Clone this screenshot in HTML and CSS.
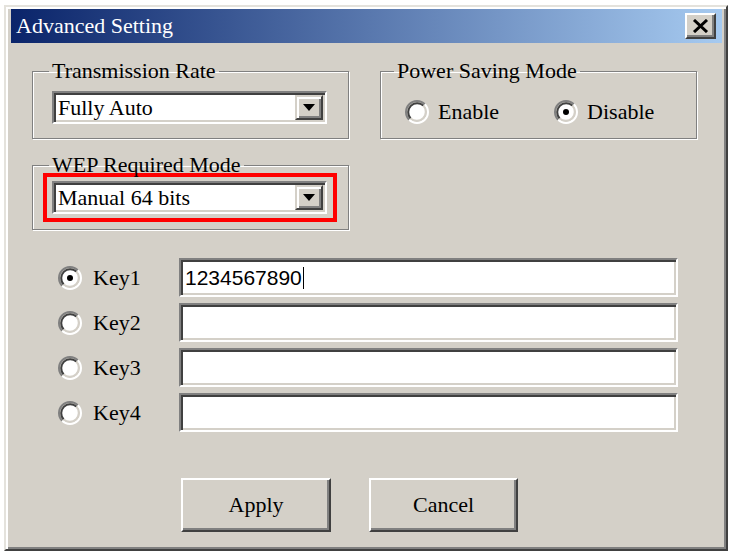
FILE: index.html
```html
<!DOCTYPE html>
<html>
<head>
<meta charset="utf-8">
<title>Advanced Setting</title>
<link rel="stylesheet" href="styles.css">
</head>
<body>
<div class="window">
  <div class="titlebar">
    <span class="title">Advanced Setting</span>
    <div class="close">
      <svg width="17" height="14" viewBox="0 0 17 14"><path d="M2 1 L15 13 M15 1 L2 13" stroke="#000" stroke-width="3" fill="none"/></svg>
    </div>
  </div>
  <div class="client">
    <div class="top-row">
      <fieldset class="group">
        <legend>Transmission Rate</legend>
        <div class="combo combo-rate">
          <span class="combo-text">Fully Auto</span>
          <span class="drop"><svg width="12" height="7" viewBox="0 0 12 7"><path d="M0 0 H12 L6 7 Z" fill="#000"/></svg></span>
        </div>
      </fieldset>
      <fieldset class="group group-power">
        <legend>Power Saving Mode</legend>
        <div class="radios">
          <label class="radio">
            <svg class="rb" width="24" height="24" viewBox="0 0 12 12"><circle cx="6" cy="6" r="4.5" fill="#fff"/><path d="M2.11 9.89 A5.5 5.5 0 0 1 9.89 2.11" stroke="#808080" fill="none"/><path d="M9.89 2.11 A5.5 5.5 0 0 1 2.11 9.89" stroke="#fff" fill="none"/><path d="M2.82 9.18 A4.5 4.5 0 0 1 9.18 2.82" stroke="#404040" fill="none"/><path d="M9.18 2.82 A4.5 4.5 0 0 1 2.82 9.18" stroke="#d4d0c8" fill="none"/></svg>
            <span>Enable</span>
          </label>
          <label class="radio">
            <svg class="rb" width="24" height="24" viewBox="0 0 12 12"><circle cx="6" cy="6" r="4.5" fill="#fff"/><path d="M2.11 9.89 A5.5 5.5 0 0 1 9.89 2.11" stroke="#808080" fill="none"/><path d="M9.89 2.11 A5.5 5.5 0 0 1 2.11 9.89" stroke="#fff" fill="none"/><path d="M2.82 9.18 A4.5 4.5 0 0 1 9.18 2.82" stroke="#404040" fill="none"/><path d="M9.18 2.82 A4.5 4.5 0 0 1 2.82 9.18" stroke="#d4d0c8" fill="none"/><circle cx="6" cy="6" r="1.5" fill="#000"/></svg>
            <span>Disable</span>
          </label>
        </div>
      </fieldset>
    </div>
    <fieldset class="group group-wep">
      <legend>WEP Required Mode</legend>
      <div class="highlight">
        <div class="combo">
          <span class="combo-text">Manual 64 bits</span>
          <span class="drop"><svg width="12" height="7" viewBox="0 0 12 7"><path d="M0 0 H12 L6 7 Z" fill="#000"/></svg></span>
        </div>
      </div>
    </fieldset>
    <div class="keys">
      <svg class="rb" width="24" height="24" viewBox="0 0 12 12"><circle cx="6" cy="6" r="4.5" fill="#fff"/><path d="M2.11 9.89 A5.5 5.5 0 0 1 9.89 2.11" stroke="#808080" fill="none"/><path d="M9.89 2.11 A5.5 5.5 0 0 1 2.11 9.89" stroke="#fff" fill="none"/><path d="M2.82 9.18 A4.5 4.5 0 0 1 9.18 2.82" stroke="#404040" fill="none"/><path d="M9.18 2.82 A4.5 4.5 0 0 1 2.82 9.18" stroke="#d4d0c8" fill="none"/><circle cx="6" cy="6" r="1.5" fill="#000"/></svg>
      <span class="key-label">Key1</span>
      <div class="field"><span class="field-text">1234567890</span><span class="caret"></span></div>

      <svg class="rb" width="24" height="24" viewBox="0 0 12 12"><circle cx="6" cy="6" r="4.5" fill="#fff"/><path d="M2.11 9.89 A5.5 5.5 0 0 1 9.89 2.11" stroke="#808080" fill="none"/><path d="M9.89 2.11 A5.5 5.5 0 0 1 2.11 9.89" stroke="#fff" fill="none"/><path d="M2.82 9.18 A4.5 4.5 0 0 1 9.18 2.82" stroke="#404040" fill="none"/><path d="M9.18 2.82 A4.5 4.5 0 0 1 2.82 9.18" stroke="#d4d0c8" fill="none"/></svg>
      <span class="key-label">Key2</span>
      <div class="field"></div>

      <svg class="rb" width="24" height="24" viewBox="0 0 12 12"><circle cx="6" cy="6" r="4.5" fill="#fff"/><path d="M2.11 9.89 A5.5 5.5 0 0 1 9.89 2.11" stroke="#808080" fill="none"/><path d="M9.89 2.11 A5.5 5.5 0 0 1 2.11 9.89" stroke="#fff" fill="none"/><path d="M2.82 9.18 A4.5 4.5 0 0 1 9.18 2.82" stroke="#404040" fill="none"/><path d="M9.18 2.82 A4.5 4.5 0 0 1 2.82 9.18" stroke="#d4d0c8" fill="none"/></svg>
      <span class="key-label">Key3</span>
      <div class="field"></div>

      <svg class="rb" width="24" height="24" viewBox="0 0 12 12"><circle cx="6" cy="6" r="4.5" fill="#fff"/><path d="M2.11 9.89 A5.5 5.5 0 0 1 9.89 2.11" stroke="#808080" fill="none"/><path d="M9.89 2.11 A5.5 5.5 0 0 1 2.11 9.89" stroke="#fff" fill="none"/><path d="M2.82 9.18 A4.5 4.5 0 0 1 9.18 2.82" stroke="#404040" fill="none"/><path d="M9.18 2.82 A4.5 4.5 0 0 1 2.82 9.18" stroke="#d4d0c8" fill="none"/></svg>
      <span class="key-label">Key4</span>
      <div class="field"></div>
    </div>
    <div class="buttons">
      <div class="btn">Apply</div>
      <div class="btn btn-cancel">Cancel</div>
    </div>
  </div>
</div>
</body>
</html>
```

FILE: styles.css
```css
body {
  margin: 0;
  background: #ffffff;
  font-family: "Liberation Serif", "Times New Roman", serif;
  font-size: 22px;
  color: #000;
}

.window {
  box-sizing: border-box;
  width: 724px;
  height: 546px;
  margin: 5px 0 0 4px;
  background: #d4d0c8;
  border: 2px solid;
  border-color: #e4e2dc #404040 #404040 #e4e2dc;
  box-shadow: inset 2px 2px 0 #ffffff, inset -2px -2px 0 #808080;
  padding: 2px 4px 0 5px;
  display: flex;
  flex-direction: column;
}

.titlebar {
  height: 34px;
  display: flex;
  align-items: center;
  justify-content: space-between;
  padding: 0 6px 0 5px;
  background: linear-gradient(to right, #0a246a, #a6caf0);
  color: #fff;
}

.title {
  line-height: 24px;
}

.close {
  box-sizing: border-box;
  width: 31px;
  height: 26px;
  background: #d4d0c8;
  border: 2px solid;
  border-color: #ffffff #404040 #404040 #ffffff;
  box-shadow: inset -2px -2px 0 #808080;
  display: flex;
  align-items: center;
  justify-content: center;
}

.top-row {
  display: flex;
  gap: 31px;
  margin: 17px 0 0 21px;
}

fieldset.group {
  box-sizing: border-box;
  width: 317px;
  min-width: 0;
  margin: 0;
  padding: 0;
  border: 1px solid #808080;
  box-shadow: inset 1px 1px 0 #ffffff, 1px 1px 0 #ffffff;
}

fieldset.group legend {
  margin-left: 16px;
  padding: 0 3px;
  line-height: 22px;
}

fieldset.group-power legend {
  margin-left: 13px;
}

.combo {
  box-sizing: border-box;
  width: 275px;
  height: 33px;
  background: #fff;
  border: 2px solid;
  border-color: #808080 #ffffff #ffffff #808080;
  box-shadow: inset 2px 2px 0 #404040, inset -2px -2px 0 #d4d0c8;
  padding: 2px 2px 2px 4px;
  display: flex;
  align-items: center;
  justify-content: space-between;
}

.combo-rate {
  margin: 9px 0 14px 19px;
}

.combo-text {
  line-height: 24px;
}

.drop {
  box-sizing: border-box;
  width: 28px;
  height: 25px;
  background: #d4d0c8;
  border: 2px solid;
  border-color: #d4d0c8 #404040 #404040 #d4d0c8;
  box-shadow: inset 2px 2px 0 #ffffff, inset -2px -2px 0 #808080;
  display: flex;
  align-items: center;
  justify-content: center;
}

.radios {
  display: flex;
  align-items: center;
  gap: 55px;
  height: 24px;
  margin: 18px 0 0 24px;
}

.radio {
  display: flex;
  align-items: center;
  gap: 9px;
  line-height: 24px;
}

.rb {
  display: block;
}

fieldset.group-wep {
  margin: 15px 0 0 21px;
}

.highlight {
  box-sizing: border-box;
  width: 294px;
  margin: -3px 0 7px 10px;
  border: 4px solid #ff0000;
  padding: 4px 6px 4px 5px;
}

.keys {
  display: grid;
  grid-template-columns: 24px 75px 499px;
  column-gap: 11px;
  row-gap: 6px;
  align-items: center;
  margin: 28px 0 0 47px;
}

.key-label {
  line-height: 24px;
}

.field {
  box-sizing: border-box;
  height: 39px;
  background: #fff;
  border: 2px solid;
  border-color: #808080 #ffffff #ffffff #808080;
  box-shadow: inset 2px 2px 0 #404040, inset -2px -2px 0 #d4d0c8;
  padding: 0 4px;
  display: flex;
  align-items: center;
  font-family: "Liberation Sans", Arial, sans-serif;
  font-size: 21px;
}

.caret {
  width: 1px;
  height: 22px;
  background: #000;
  margin-left: 1px;
}

.buttons {
  display: flex;
  gap: 38px;
  margin: 46px 0 0 170px;
}

.btn {
  box-sizing: border-box;
  width: 150px;
  height: 54px;
  background: #d4d0c8;
  border: 2px solid;
  border-color: #ffffff #404040 #404040 #ffffff;
  box-shadow: inset -2px -2px 0 #808080;
  display: flex;
  align-items: center;
  justify-content: center;
  line-height: 24px;
}

.btn-cancel {
  width: 149px;
}
```
